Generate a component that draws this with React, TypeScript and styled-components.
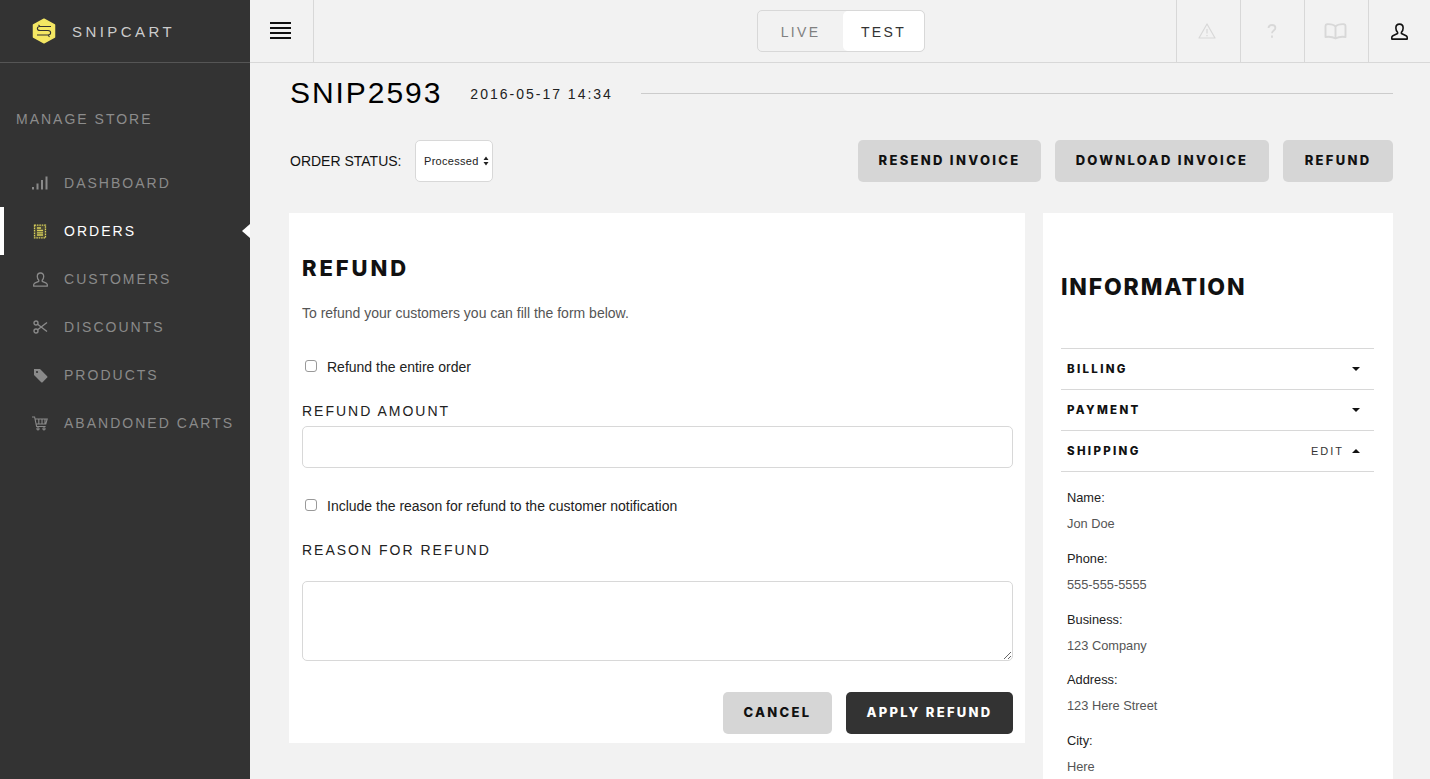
import React from 'react';
import styled, { createGlobalStyle } from 'styled-components';

const Global = createGlobalStyle`
  html, body { margin: 0; height: 100%; overflow: hidden; background: #f2f2f2; }
  #root { height: 100%; }
  * { box-sizing: border-box; }
  body { font-family: "Liberation Sans", Arial, sans-serif; }
`;
const bold = `"Inter", "Liberation Sans", sans-serif`;

const Shell = styled.div`display: flex; height: 779px; overflow: hidden;`;
const Sidebar = styled.aside`width: 250px; flex: none; background: #333; display: flex; flex-direction: column;`;
const Brand = styled.div`
  height: 63px; border-bottom: 1px solid #555; display: flex; align-items: center; padding: 0 0 0 32px; gap: 16px;
  color: #ccc; font-size: 15px; letter-spacing: 3.45px;
`;
const SectionTitle = styled.div`
  margin: 47px 0 0 16px; height: 18px; line-height: 18px; font-size: 14px; letter-spacing: 2px; color: #8c8c8c;
`;
const Nav = styled.nav`margin-top: 31px; display: flex; flex-direction: column;`;
const NavItem = styled.a<{ $active?: boolean }>`
  position: relative; height: 48px; display: flex; align-items: center; padding-left: 28px;
  border-left: 4px solid ${p => (p.$active ? '#fff' : 'transparent')};
  color: ${p => (p.$active ? '#fff' : '#8a8a8a')};
  font-size: 14px; letter-spacing: 2.02px;
  ${p => p.$active ? `&::after { content: ''; position: absolute; right: 0; top: 17px; border: 7px solid transparent; border-left: 0; border-right: 8px solid #fff; }` : ''}
`;
const NavIcon = styled.span`width: 16px; height: 16px; margin-right: 16px; display: flex; align-items: center; justify-content: center;`;

const Column = styled.div`flex: 1; min-width: 0; display: flex; flex-direction: column;`;
const TopBar = styled.header`height: 63px; flex: none; border-bottom: 1px solid #d8d8d8; display: flex; position: relative; align-items: stretch;`;
const Burger = styled.div`width: 64px; border-right: 1px solid #d8d8d8; display: flex; align-items: center; justify-content: center; padding-right: 3px;`;
const ToggleWrap = styled.div`flex: 1; display: flex; justify-content: center; align-items: flex-start; padding: 10px 0 0 0;`;
const Toggle = styled.div`display: flex; width: 168px; height: 42px; border: 1px solid #d8d8d8; border-radius: 5px; margin-left: 192px;`;
const ToggleOption = styled.div<{ $on?: boolean; $w: number }>`
  width: ${p => p.$w}px; display: flex; align-items: center; justify-content: center; padding-top: 1px;
  font-size: 14px; letter-spacing: 2.3px;
  color: ${p => (p.$on ? '#333' : '#808080')};
  background: ${p => (p.$on ? '#fff' : 'transparent')};
  border-radius: ${p => (p.$on ? '5px' : '0')};
`;
const TopCell = styled.div<{ $nudge?: number }>`
  width: 64px; border-left: 1px solid #d8d8d8; display: flex; align-items: center; justify-content: center;
  padding-right: ${p => p.$nudge ?? 0}px;
`;
const TopCellLast = styled(TopCell)`width: 62px;`;

const Main = styled.main`flex: 1; padding: 0 37px 0 39px; overflow: hidden;`;
const TitleRow = styled.div`display: flex; align-items: center; height: 60px; margin-bottom: 17px; padding-left: 1px;`;
const OrderTitle = styled.h1`margin: 0; font-weight: 400; font-size: 30px; letter-spacing: 1.95px; color: #000; line-height: 60px;`;
const DateText = styled.span`margin: 2px 0 0 28px; font-size: 14px; letter-spacing: 2px; color: #222;`;
const Rule = styled.div`flex: 1; height: 1px; background: #ccc; margin-left: 28px;`;
const StatusRow = styled.div`display: flex; align-items: center; height: 42px; padding-left: 1px;`;
const StatusLabel = styled.label`font-size: 14px; color: #111; width: 125px;`;
const SelectBox = styled.div`position: relative; width: 78px; height: 42px;`;
const Select = styled.select`
  appearance: none; width: 100%; height: 100%; background: #fff; border: 1px solid #d8d8d8; border-radius: 5px;
  font: 11px "Liberation Sans", sans-serif; letter-spacing: .3px; color: #222; padding: 0 0 0 8px; outline: none;
`;
const SelectArrows = styled.svg`position: absolute; right: 4px; top: 16px; pointer-events: none;`;
const Actions = styled.div`margin-left: auto; display: flex; gap: 14px;`;
const Btn = styled.button<{ $dark?: boolean; $w: number }>`
  width: ${p => p.$w}px; height: 42px; border: 0; border-radius: 5px;
  background: ${p => (p.$dark ? '#333' : '#d6d6d6')};
  color: ${p => (p.$dark ? '#fff' : '#111')};
  font: 800 13px ${bold}; letter-spacing: 2.3px; padding: 0 0 2px;
`;
const Cards = styled.div`display: flex; gap: 18px; margin-top: 31px; align-items: flex-start;`;
const RefundCard = styled.section`width: 736px; height: 530px; flex: none; background: #fff; padding: 0 12px 0 13px;`;
const InfoCard = styled.section`width: 350px; height: 700px; flex: none; background: #fff; padding: 0 19px 0 18px;`;
const RefundHeading = styled.h2`margin: 42px 0 0; font: 800 22px/26px ${bold}; letter-spacing: 2.9px; color: #111;`;
const Lead = styled.p`margin: 23px 0 0; font-size: 14px; line-height: 18px; color: #555;`;
const CheckRow = styled.label<{ $top: number }>`display: flex; align-items: center; margin-top: ${p => p.$top}px; height: 18px; font-size: 14px; color: #222;`;
const Check = styled.input`
  appearance: none; width: 12px; height: 12px; margin: 0 10px 2px 3px; border: 1px solid #999; border-radius: 3px; background: #fff;
`;
const FieldLabel = styled.div<{ $top: number }>`margin-top: ${p => p.$top}px; font-size: 14px; line-height: 18px; letter-spacing: 2px; color: #222;`;
const TextInput = styled.input`display: block; width: 100%; height: 42px; margin-top: 6px; border: 1px solid #d8d8d8; border-radius: 5px; background: #fff; outline: none;`;
const TextArea = styled.textarea`display: block; width: 100%; height: 80px; margin-top: 22px; border: 1px solid #d8d8d8; border-radius: 5px; background: #fff; outline: none; resize: vertical;`;
const FormActions = styled.div`display: flex; justify-content: flex-end; gap: 14px; margin-top: 31px;`;
const InfoHeading = styled.h2`margin: 60px 0 46px; font: 800 23px/29px ${bold}; letter-spacing: 1.8px; color: #111;`;
const Accordion = styled.div`border-top: 1px solid #d8d8d8;`;
const AccRow = styled.div`height: 41px; border-bottom: 1px solid #d8d8d8; display: flex; align-items: center; padding: 0 14px 1px 6px; font: 800 11.5px ${bold}; letter-spacing: 2.3px; color: #111;`;
const AccEdit = styled.span`margin-left: auto; margin-right: 8px; font: 400 11px "Liberation Sans", sans-serif; letter-spacing: 2px; color: #333;`;
const Caret = styled.span<{ $up?: boolean }>`
  width: 0; height: 0; border-left: 4px solid transparent; border-right: 4px solid transparent;
  ${p => p.$up ? 'border-bottom: 4px solid #111;' : 'border-top: 4px solid #111;'}
`;
const CaretEnd = styled(Caret)`margin-left: auto;`;
const Details = styled.dl`margin: 16px 0 0 6px;`;
const DLabel = styled.dt`font-size: 12.8px; line-height: 20px; color: #222;`;
const DValue = styled.dd`margin: 6px 0 14.75px; font-size: 12.8px; line-height: 20px; color: #555;`;

const grey = '#8a8a8a';
const pale = '#d8d8d8';

const Logo = () => (
  <svg width="24" height="26" viewBox="0 0 24 26">
    <path d="M12 1.200 22.500 7v12L12 24.800 1.500 19V7z" fill="#f4e763" stroke="#f4e763" strokeWidth="1.500" strokeLinejoin="round" />
    <path d="M19 8.500H8c-3.500 0-3.500 4 0 4h8c3.500 0 3.500 4.500 0 4.500H5M8 8.500 6.500 6.800M16 17l1.500 2" fill="none" stroke="#333" strokeWidth="1.100" />
  </svg>
);
const IconBars = () => (
  <svg width="16" height="14" viewBox="0 0 16 14" fill={grey}>
    <rect x="0" y="11" width="2" height="2.5" /><rect x="4.5" y="7.5" width="2" height="6" /><rect x="9" y="4" width="2" height="9.5" /><rect x="13.5" y="0.5" width="2" height="13" />
  </svg>
);
const IconReceipt = () => (
  <svg width="14" height="15" viewBox="0 0 14 15" fill="none" stroke="#d8cf5a" strokeWidth="1.3">
    <path d="M1.500 1.200h11v12.600h-11z" fill="#4a4835" strokeDasharray="1.600 .8" />
    <path d="M4 4h4M4 6.500h6M4 8.800h6M4 11h6" />
  </svg>
);
const IconUser = ({ c, w = 1.3, s = 15 }: { c: string; w?: number; s?: number }) => (
  <svg width={s} height={s} viewBox="0 0 15 15" fill="none" stroke={c} strokeWidth={w} strokeLinejoin="round">
    <path d="M7.500 1C5.400 1 4.300 2.600 4.300 4.400c0 1.600.6 2.900 1.500 3.800v1.100L1.700 11.200c-.7.4-1 1-1 1.600v1.400h13.600v-1.400c0-.6-.3-1.200-1-1.600L9.200 9.300V8.200c.9-.9 1.500-2.200 1.500-3.800C10.700 2.600 9.600 1 7.500 1z" />
  </svg>
);
const IconScissors = () => (
  <svg width="15" height="14" viewBox="0 0 15 14" fill="none" stroke={grey} strokeWidth="1.4">
    <circle cx="3" cy="3" r="2" /><circle cx="3" cy="11" r="2" /><path d="M4.600 4.200 14 11.500M4.600 9.800 14 2.500" />
  </svg>
);
const IconTag = () => (
  <svg width="15" height="15" viewBox="0 0 15 15" fill={grey}>
    <path d="M1 1h6l7.200 7.200a1 1 0 0 1 0 1.400l-4.600 4.600a1 1 0 0 1-1.400 0L1 7z" /><circle cx="4" cy="4" r="1.100" fill="#333" />
  </svg>
);
const IconCart = () => (
  <svg width="16" height="15" viewBox="0 0 16 15" fill="none" stroke={grey} strokeWidth="1.100">
    <path d="M0 1h2.600l2 9.500h9M3.200 3h12l-1.400 5H4.300M6.800 3v5M10 3v5M13 3v5" />
    <circle cx="6" cy="12.800" r="1.100" /><circle cx="12" cy="12.800" r="1.100" />
  </svg>
);

const items: [string, React.ReactNode][] = [
  ['DASHBOARD', <IconBars />],
  ['ORDERS', <IconReceipt />],
  ['CUSTOMERS', <IconUser c={grey} />],
  ['DISCOUNTS', <IconScissors />],
  ['PRODUCTS', <IconTag />],
  ['ABANDONED CARTS', <IconCart />],
];
const details = [
  ['Name:', 'Jon Doe'],
  ['Phone:', '555-555-5555'],
  ['Business:', '123 Company'],
  ['Address:', '123 Here Street'],
  ['City:', 'Here'],
];

export default function App() {
  return (
    <Shell>
      <Global />
      <Sidebar>
        <Brand><Logo />SNIPCART</Brand>
        <SectionTitle>MANAGE STORE</SectionTitle>
        <Nav>
          {items.map(([label, icon]) => (
            <NavItem key={label} $active={label === 'ORDERS'}>
              <NavIcon>{icon}</NavIcon>{label}
            </NavItem>
          ))}
        </Nav>
      </Sidebar>
      <Column>
        <TopBar>
          <Burger>
            <svg width="21" height="18" viewBox="0 0 21 18" fill="#111">
              <rect y="0" width="21" height="2" /><rect y="5" width="21" height="2" /><rect y="10" width="21" height="2" /><rect y="15" width="21" height="2" />
            </svg>
          </Burger>
          <ToggleWrap>
            <Toggle>
              <ToggleOption $w={85}>LIVE</ToggleOption>
              <ToggleOption $w={81} $on>TEST</ToggleOption>
            </Toggle>
          </ToggleWrap>
          <TopCell $nudge={3}>
            <svg width="18" height="16" viewBox="0 0 18 16" fill="none" stroke={pale} strokeWidth="1.200" strokeLinejoin="round">
              <path d="M9 1 17 15H1z" /><path d="M9 6v4.500M9 12v1.200" />
            </svg>
          </TopCell>
          <TopCell $nudge={1}>
            <svg width="10" height="15" viewBox="0 0 10 15" fill="none" stroke={pale} strokeWidth="1.800">
              <path d="M1.500 4C1.500 2 3 1 5 1s3.400 1.100 3.400 3c0 2.600-3.400 2.400-3.400 5.200" /><path d="M5 11.500v2.200" />
            </svg>
          </TopCell>
          <TopCell $nudge={2}>
            <svg width="23" height="17" viewBox="0 0 23 17" fill="none" stroke={pale} strokeWidth="1.900" strokeLinejoin="round">
              <path d="M11.500 3.500C10 1.800 7 1 3 1.200 2 1.300 1.500 2 1.500 3v11c3.500-.5 7-.3 10 1.500 3-1.800 6.500-2 10-1.500V3c0-1-.5-1.700-1.500-1.800-4-.2-7 .6-8.500 2.300zM11.500 3.500v12" />
            </svg>
          </TopCell>
          <TopCellLast><IconUser c="#111" w={1.4} s={17} /></TopCellLast>
        </TopBar>
        <Main>
          <TitleRow>
            <OrderTitle>SNIP2593</OrderTitle>
            <DateText>2016-05-17 14:34</DateText>
            <Rule />
          </TitleRow>
          <StatusRow>
            <StatusLabel>ORDER STATUS:</StatusLabel>
            <SelectBox>
              <Select defaultValue="Processed"><option>Processed</option></Select>
              <SelectArrows width="6" height="10" viewBox="0 0 6 10" fill="#222">
                <path d="M3 .5 5.500 4H.5zM3 9.500 .5 6h5z" />
              </SelectArrows>
            </SelectBox>
            <Actions>
              <Btn $w={183}>RESEND INVOICE</Btn>
              <Btn $w={214}>DOWNLOAD INVOICE</Btn>
              <Btn $w={110}>REFUND</Btn>
            </Actions>
          </StatusRow>
          <Cards>
            <RefundCard>
              <RefundHeading>REFUND</RefundHeading>
              <Lead>To refund your customers you can fill the form below.</Lead>
              <CheckRow $top={36}><Check type="checkbox" />Refund the entire order</CheckRow>
              <FieldLabel $top={26}>REFUND AMOUNT</FieldLabel>
              <TextInput />
              <CheckRow $top={29}><Check type="checkbox" />Include the reason for refund to the customer notification</CheckRow>
              <FieldLabel $top={26}>REASON FOR REFUND</FieldLabel>
              <TextArea />
              <FormActions>
                <Btn $w={109}>CANCEL</Btn>
                <Btn $w={167} $dark>APPLY REFUND</Btn>
              </FormActions>
            </RefundCard>
            <InfoCard>
              <InfoHeading>INFORMATION</InfoHeading>
              <Accordion>
                <AccRow>BILLING<CaretEnd /></AccRow>
                <AccRow>PAYMENT<CaretEnd /></AccRow>
                <AccRow>SHIPPING<AccEdit>EDIT</AccEdit><Caret $up /></AccRow>
              </Accordion>
              <Details>
                {details.map(([k, v]) => (
                  <React.Fragment key={k}>
                    <DLabel>{k}</DLabel>
                    <DValue>{v}</DValue>
                  </React.Fragment>
                ))}
              </Details>
            </InfoCard>
          </Cards>
        </Main>
      </Column>
    </Shell>
  );
}
